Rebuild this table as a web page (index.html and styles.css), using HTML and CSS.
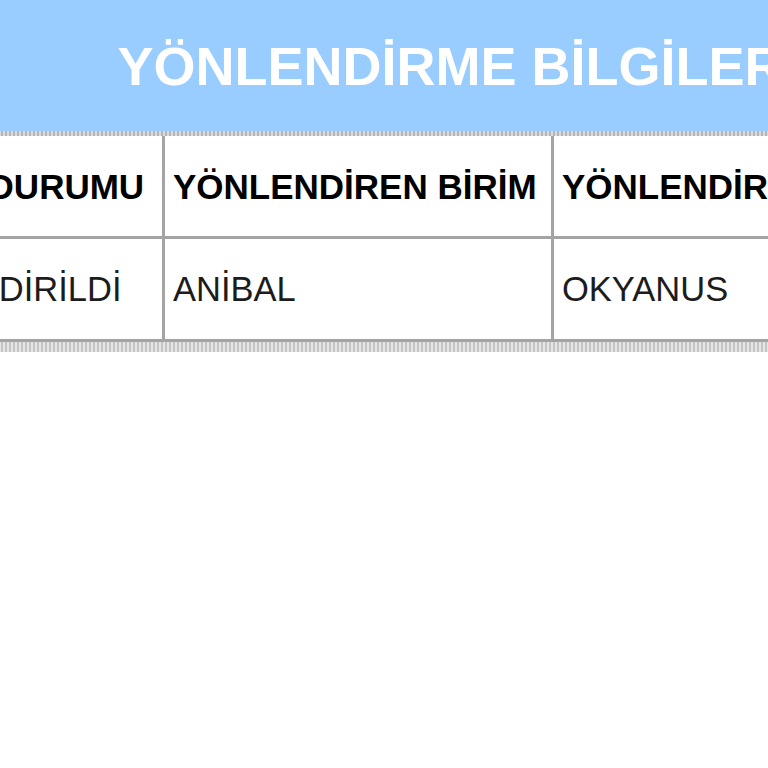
FILE: index.html
```html
<!DOCTYPE html>
<html lang="tr">
<head>
<meta charset="utf-8">
<title>Yönlendirme Bilgileri</title>
<link rel="stylesheet" href="styles.css">
</head>
<body>
<div class="viewport">
  <div class="frame">
    <table class="grid">
      <colgroup>
        <col class="c1">
        <col class="c2">
        <col class="c3">
      </colgroup>
      <thead>
        <tr>
          <th class="title" colspan="3">YÖNLENDİRME BİLGİLERİ</th>
        </tr>
        <tr class="head">
          <th>KABUL DURUMU</th>
          <th>YÖNLENDİREN BİRİM</th>
          <th class="last">YÖNLENDİRİLEN BİRİM</th>
        </tr>
      </thead>
      <tbody>
        <tr class="row">
          <td>YÖNLENDİRİLDİ</td>
          <td>ANİBAL</td>
          <td class="last">OKYANUS</td>
        </tr>
      </tbody>
    </table>
  </div>
</div>
</body>
</html>
```
FILE: styles.css
```css
html, body {
  margin: 0;
  padding: 0;
  background: #ffffff;
}

.viewport {
  width: 768px;
  height: 768px;
  overflow: hidden;
  font-family: "Liberation Sans", Arial, sans-serif;
}

.frame {
  width: 1218px;
  margin-left: -151px;
  padding-bottom: 10px;
  background:
    repeating-linear-gradient(90deg, #c4c4c4 0 2px, #e6e6e6 2px 4px) bottom / 100% 10px no-repeat;
}

.grid {
  width: 1218px;
  table-layout: fixed;
  border-collapse: separate;
  border-spacing: 0;
}

.c1 { width: 316px; }
.c2 { width: 389px; }
.c3 { width: 513px; }

.title {
  height: 136px;
  box-sizing: border-box;
  padding: 0 0 5px 0;
  background:
    repeating-linear-gradient(90deg, #b4b4b4 0 2px, #dcdcdc 2px 4px) bottom / 100% 5px no-repeat,
    #99ccff;
  color: #ffffff;
  font-size: 54px;
  font-weight: bold;
  text-align: center;
  vertical-align: middle;
  line-height: 1;
}

.head th,
.row td {
  height: 100px;
  padding: 0 8px;
  line-height: 1;
  text-align: left;
  vertical-align: middle;
  border-right: 3px solid #a4a4a4;
  border-bottom: 3px solid #a4a4a4;
  white-space: nowrap;
  overflow: hidden;
}

.head th {
  font-size: 35px;
  font-weight: bold;
  color: #000000;
}

.row td {
  font-size: 34.5px;
  font-weight: normal;
  color: #1c1c1c;
}

.head .last,
.row .last {
  border-right: none;
}
```
